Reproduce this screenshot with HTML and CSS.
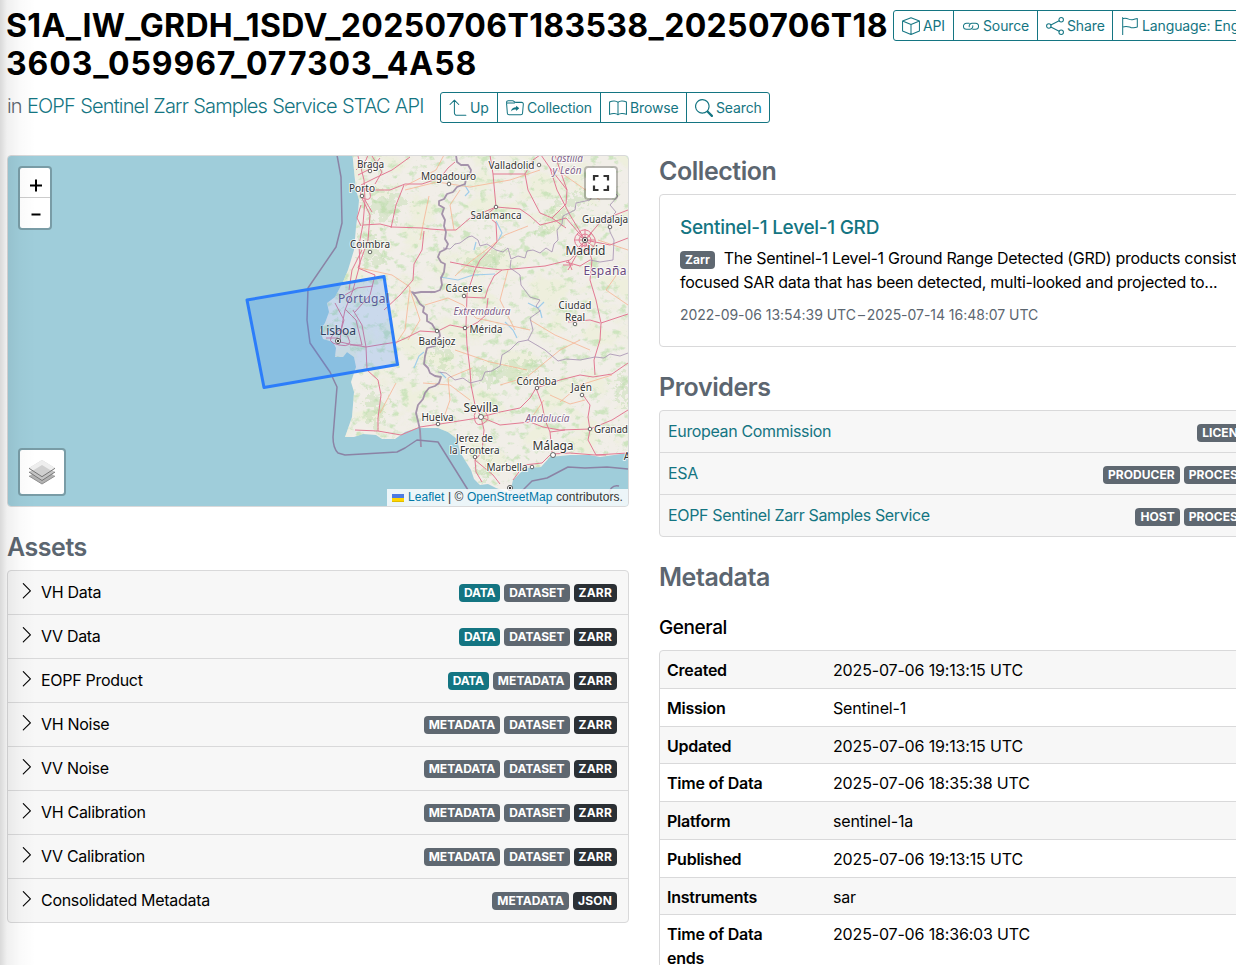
FILE: index.html
```html
<!DOCTYPE html>
<html lang="en">
<head>
<meta charset="utf-8">
<title>S1A_IW_GRDH_1SDV_20250706T183538</title>
<link rel="stylesheet" href="styles.css">
</head>
<body>
<svg class="sprite" aria-hidden="true">
  <symbol id="chev" viewBox="0 0 16 16"><path d="M4.3 1.2 11.4 8.3 4.3 15.4" fill="none" stroke="#000" stroke-width="1.15" stroke-linecap="round" stroke-linejoin="round"/></symbol>
</svg>
<div class="page">
  <header class="header">
    <div class="heading">
      <h1 class="title"><span class="l1">S1A_IW_GRDH_1SDV_20250706T183538_20250706T18</span><span class="l2">3603_059967_077303_4A58</span></h1>
      <div class="sub">
        <p class="in">in <a class="link">EOPF Sentinel Zarr Samples Service STAC API</a></p>
        <div class="btns">
          <button class="btn up"><svg class="ico" viewBox="0 0 16 16"><path d="M4.8 1v11.3a2.2 2.2 0 0 0 2.2 2.2h8M.9 4.9 4.8 1l3.9 3.9"/></svg><span>Up</span></button>
          <button class="btn coll"><svg class="ico" viewBox="0 0 16 16"><path d="M.6 3.8 .5 3a1.5 1.5 0 0 1 1.5-1.5h3.7c1.7 0 1.6 1.5 3.1 1.5h5.1a1.5 1.5 0 0 1 1.5 1.6l-.7 8a1.5 1.5 0 0 1-1.5 1.4H2.7a1.5 1.5 0 0 1-1.5-1.4L.6 5A1 1 0 0 1 1.500 3.500h6"/><path class="solid" d="m11.8 8.300-2.800-2.300v1.400C6.600 7.400 4.900 8.700 4.300 11c1.300-1.300 2.700-1.700 4.700-1.600v1.300z"/></svg><span>Collection</span></button>
          <button class="btn brow"><svg class="ico" viewBox="0 0 16 16"><path d="M8 3C6.500 1.500 3 1.500.5 2.700v11C3 12.500 6.500 12.500 8 14c1.500-1.500 5-1.500 7.500-.3v-11C13 1.500 9.500 1.500 8 3zv11"/></svg><span>Browse</span></button>
          <button class="btn sear"><svg class="ico" viewBox="0 0 16 16"><path class="solid" d="M11.742 10.344a6.500 6.500 0 1 0-1.397 1.398h-.001q.044.060.098.115l3.850 3.850a1 1 0 0 0 1.415-1.414l-3.850-3.850a1 1 0 0 0-.115-.1zM12 6.500a5.500 5.500 0 1 1-11 0 5.500 5.500 0 0 1 11 0"/></svg><span>Search</span></button>
        </div>
      </div>
    </div>
    <div class="btns actions">
      <button class="btn api"><svg class="ico" viewBox="0 0 16 16"><path d="M8 .6 15.500 3.600v8.800L8 15.500.5 12.400V3.600zM.5 3.600 8 6.600l7.500-3M8 6.600v8.900"/></svg><span>API</span></button>
      <button class="btn src"><svg class="ico" viewBox="0 0 16 16"><path d="M6.400 5.500H4a2.700 2.700 0 0 0 0 5.400h3a2.700 2.700 0 0 0 2.600-3.200M9.600 10.900H12a2.700 2.700 0 0 0 0-5.400H9a2.700 2.700 0 0 0-2.600 3.200"/></svg><span>Source</span></button>
      <button class="btn shar"><svg class="ico" viewBox="0 0 16 16"><circle cx="2.500" cy="8" r="2"/><circle cx="13.500" cy="2.500" r="2"/><circle cx="13.500" cy="13.500" r="2"/><path d="m4.300 7.100 7.400-3.700M4.300 8.900l7.400 3.700"/></svg><span>Share</span></button>
      <button class="btn lang"><svg class="ico" viewBox="0 0 16 16"><path d="M1.500 16V.5M1.500 1.500C6 .2 7 3 10 2.500c1.800-.2 3-1 4.500-1.200v7.500C12 9.300 11 10 9 9.500 6 8.500 5 7.500 1.500 9"/></svg><span>Language: English</span></button>
    </div>
  </header>

  <main class="cols">
    <section class="left">
      <div class="map">
        <svg class="tiles" viewBox="8 156 620 350" width="620" height="350">
          <defs>
            <path id="land" d="M352 150 354 170 356 190 359 200 358 212 356 227 354 250 348 270 343 282 335 297 327 303 329 312 325 323 320 330 323 339 333 342 336 348 335 357 343 357 347 352 354 357 356 367 351 382 354 392 352 417 345 437 354 437 363 434 376 435 382 439 395 439 405 432 417 428 438 428 448 432 457 439 460 452 466 462 471 470 474 479 480 485 488 484 496 488 510 493 513 480 520 473 527 468 541 467 550 457 570 455 590 455 600 457 628 453V150z"/>
            <clipPath id="lc"><use href="#land"/></clipPath>
            <filter id="woods" x="0" y="0" width="100%" height="100%" color-interpolation-filters="sRGB"><feTurbulence type="fractalNoise" baseFrequency=".1 .13" numOctaves="5" seed="8"/><feColorMatrix values="0 0 0 0 .76  0 0 0 0 .88  0 0 0 0 .7  5 0 0 0 -2.800"/></filter>
            <filter id="farm" x="0" y="0" width="100%" height="100%" color-interpolation-filters="sRGB"><feTurbulence type="fractalNoise" baseFrequency=".03 .04" numOctaves="5" seed="21"/><feColorMatrix values="0 0 0 0 .92  0 0 0 0 .94  0 0 0 0 .83  0 6 0 0 -3"/></filter>
            <filter id="rough" x="-20%" y="-20%" width="140%" height="140%" color-interpolation-filters="sRGB"><feTurbulence type="fractalNoise" baseFrequency=".15" numOctaves="4" seed="5"/><feDisplacementMap in="SourceGraphic" scale="36" xChannelSelector="R" yChannelSelector="G"/></filter>
          </defs>
          <rect x="8" y="156" width="620" height="350" fill="#9fcdda"/>
          <use href="#land" fill="#f1eee8"/>
          <g clip-path="url(#lc)">
            <rect x="318" y="150" width="312" height="350" filter="url(#farm)" opacity=".55"/>
            <rect x="318" y="150" width="312" height="350" filter="url(#woods)" opacity=".75"/>
            <g class="wood" filter="url(#rough)">
              <path d="M372 195c8-6 18 4 26 0s10 10 2 16-12 14-20 12-14-18-8-28zM362 235c10-4 14 4 20 12s-2 20-10 16-16-16-10-28zM484 460c4-8 8 0 6 8s0 14-6 12 0-12 0-20zM618 375c6-6 10 0 10 12v16c-8-2-14-18-10-28zM562 202l22-14 8 6-20 18-26 20-10-4zM460 262l30-14 20 2-10 12-30 8zM368 390l12 2 4 20-8 14-10-10zM430 345l14-4 8 20-10 10zM470 372l30-8 40-6 6 8-40 12-30 4z"/>
            </g>
            <g class="water"><path d="m464 184 5 8-4 4M496 221l6 12-4 8M440 372l6 6M474 250l2-8M414 368l5-12 5-4M528 303l10 5 6-6M540 310l2 8M505 322l8 8 4 8M440 277l18 3 15-5 22-1"/></g>
          </g>
          <g class="minor">
            <path d="M405 190 437 182 470 187 510 180 540 170M429 196 424 220 420 240M444 155 436 170 405 186M528 226 505 235 486 250 470 262 455 276M360 268 392 275 410 287 405 330 395 345M380 413 396 383M410 290 420 320 408 340M454 230 450 205 460 190M557 170 600 200M598 240 628 250M500 385 527 377 560 350 580 340M550 395 570 404 585 400M560 402 580 385 612 375M472 368 448 378 450 400 443 420M423 383 450 385 470 400M425 305 448 298 463 305M455 350 490 362 527 370M530 320 555 335 590 350M508 270 500 300 515 330M463 305 476 318 530 330M544 400 530 420M620 270 606 290 628 305"/>
          </g>
          <g class="road">
            <path d="M358 156 364 180 365 200 363 224 359 245 360 264 353 290 345 310 341 330 340 342 354 345 366 347 367 370M361 185 375 178 392 170 410 157M360 190 390 190 405 184 422 184 440 178 448 168 455 162M362 198 370 215 368 240 358 268 375 275 370 295 355 312M367 370 378 380 381 395 378 418 378 431M355 430 378 431 401 435 420 427 440 424 478 418M363 225 380 224 392 227 423 228 430 229 444 230 456 230 470 218 496 207M424 231 422 250 414 264 413 280 400 295 384 310M404 185 396 205 391 228M345 295 357 288 373 286M384 344 397 342 406 338 420 331 436 332M436 332 450 325 465 328M496 207 493 174 490 155M496 207 486 215 496 223 497 242 480 260 475 270 467 294 466 326 467 345 470 370 471 385 475 405 481 417M525 174 528 190 540 213 552 218 566 228M525 174 533 160 540 155M493 174 525 174M496 207 520 209 530 216 540 225 552 222 566 218 585 240M450 262 475 267 502 270 545 266 570 260 584 245M463 297 485 298 488 288 494 276 502 270M463 330 478 322 486 315 488 298M585 240 592 260 590 280 596 300 601 323 600 340 594 360 595 375M601 323 628 314M585 240 602 220 628 210M585 240 570 215 557 190 550 168 541 155M552 218 566 204 567 190 550 168M585 240 610 245 628 238M585 240 568 270M481 417 500 412 520 408 530 398 536 388M536 388 560 380 580 375 593 377 612 374 628 363M536 388 542 404 545 420 550 432 552 452M481 417 484 430 482 452 475 460 476 472M481 417 500 425 530 422 543 427M475 460 493 475 500 484M476 472 482 482M543 427 560 430 590 429 612 420 628 410M583 395 590 405 588 417 590 430 588 440 596 455M552 454 570 453 595 455 628 453M513 480 524 465 542 463 550 455M366 347 384 344M353 310 362 325 366 347M335 303 344 320 340 334M345 309 356 320 362 345 350 345M566 262 580 266 590 260M555 155 560 170 567 190M365 200 372 212M372 156 382 172 375 184M550 432 565 430M568 322 590 320 600 323M349 290 352 270 362 250M358 175 372 168 380 158M356 170 366 160 368 155M361 205 357 218 361 226"/>
            <path d="M575 240h20M577 234l17 13M585 229v24M579 247l13-14M578 233q7-7 14 1t0 14-14-1 0-14M581 236q4-4 8 0t0 8-8 0 0-8M335 333q7-7 13 4t-9 8-4-12M476 411q5-4 10 2t-2 10-9-2 1-10M362 190q6-5 8 3t-5 6-3-9M596 455h10M568 260l4 10M573 265h-10M326 338h12"/>
          </g>
          <g class="region"><path d="M443 248 450 249 455 244 460 243 464 240 468 237 472 236 478 240 480 246 487 244 496 250 503 252 508 248 511 259 518 256 525 258 527 251 533 250 540 253 546 248 552 252 554 244 558 240 557 230 562 224 563 216 575 210 576 203 590 200 596 190 612 190M511 260 510 268 516 272 520 275 521 285 530 297 540 300 536 306 540 311 530 318 533 330 528 340 518 342 510 350 502 355 500 366 492 371 485 372 482 380 470 383 463 378 455 380 446 373 438 372M528 340 545 350 558 361 566 359 580 360 595 357 604 358 610 354 620 356 628 353M612 190 618 196 610 205 616 212 608 220 610 232 614 240 613 260 600 262 590 260"/></g>
          <g class="border"><path d="m456 155 1 7 4 3 7 0 3 5-1 5-4 4-1 5-8 3-4 5-6 2-3 5-5 2 0 4 5 3-2 6 3 6-1 6 2 6-1 7 3 5-2 5-6 3-2 5 3 5 4 2-1 8-3 6 1 7-2 5-5 2-6 0-8 0-6 1-3-1 4 5 4 7 4 3-1 5 4 3 0 6 5 3 3 5 4 2 1 5-4 5-1 5-8 2-2 8-1 8 4 4 2 5 5 3 6 1-2 6-4 3-6 2-4 5-2 6-5 6-2 8 2 8 2 9 1 17"/></g>
          <g class="sea"><path d="M337 155 341 177 342 223 336 247 308 288 307 320 310 343 330 372 337 387 333 437Q333 448 338 453L345 455 397 452 405 448 417 440 438 442 448 458 468 490M518 495 532 481 547 478 568 467 585 468 607 467 628 469M609 498q0-14 10-12"/></g>
          <path class="foot" d="M247 300 384 276.500 397.500 364.500 264 387.500z"/>
          <g class="dots"><circle cx="370" cy="165" r="1.800"/><circle cx="362" cy="196" r="1.800"/><circle cx="449" cy="184" r="1.800"/><circle cx="539" cy="165" r="1.800"/><circle cx="496" cy="207" r="1.800"/><circle cx="370" cy="252" r="1.800"/><circle cx="610" cy="227" r="1.800"/><circle cx="464" cy="296" r="1.800"/><circle cx="575" cy="324" r="1.800"/><circle cx="465" cy="328" r="1.800"/><circle cx="437" cy="331" r="1.800"/><circle cx="537" cy="388" r="1.800"/><circle cx="582" cy="395" r="1.800"/><circle cx="481" cy="417" r="2.500"/><circle cx="438" cy="424" r="1.800"/><circle cx="590" cy="429" r="1.800"/><circle cx="553" cy="455" r="2.500"/><circle cx="475" cy="457" r="1.800"/><circle cx="532" cy="467" r="1.800"/><circle cx="585" cy="240" r="2.600"/><circle cx="338" cy="341" r="2.600"/><circle cx="510" cy="488" r="2.600"/></g>
          <g class="caps"><circle cx="585" cy="240" r="1.200"/><circle cx="338" cy="341" r="1.200"/><circle cx="510" cy="488" r="1.200"/></g>
          <g class="names">
            <text x="370.500" y="167.500" textLength="27">Braga</text><text x="362" y="192" textLength="26">Porto</text><text x="448.500" y="180" textLength="55">Mogadouro</text><text x="511.500" y="169" textLength="46">Valladolid</text><text x="496" y="219" textLength="51">Salamanca</text><text x="370" y="248" textLength="40">Coimbra</text><text x="605" y="223" textLength="46">Guadalaja</text><text x="464" y="292" textLength="37">Cáceres</text><text x="575" y="309" textLength="33">Ciudad</text><text x="575" y="321" textLength="20">Real</text><text x="486" y="332.500" textLength="33">Mérida</text><text x="437" y="345" textLength="37">Badajoz</text><text x="536.500" y="385" textLength="40">Córdoba</text><text x="581.500" y="391" textLength="21">Jaén</text><text x="437.500" y="421" textLength="32">Huelva</text><text x="611" y="433" textLength="34">Granad</text><text x="474.500" y="441.500" textLength="37">Jerez de</text><text x="474.500" y="453.500" textLength="50">la Frontera</text><text x="507" y="471" textLength="41">Marbella</text><text x="627" y="460">A</text>
            <text class="big" x="585.500" y="255" textLength="40">Madrid</text><text class="big" x="481" y="412" textLength="35">Sevilla</text><text class="big" x="553" y="450" textLength="41">Málaga</text><text class="big lis" x="338" y="335" textLength="36">Lisboa</text>
            <text class="reg" x="567" y="162" textLength="32">Castilla</text><text class="reg" x="567" y="174" textLength="29">y León</text><text class="reg" x="482" y="314.500" textLength="57">Extremadura</text><text class="reg" x="547.500" y="421.500" textLength="44">Andalucía</text>
            <text class="country" x="605" y="275" textLength="43">España</text><text class="country pt" x="363.500" y="303" textLength="51">Portugal</text>
          </g>
        </svg>
        <div class="zoom ctl"><span class="zb"><svg width="14" height="14" viewBox="0 0 14 14"><path d="M1 7.500h12M7 1.500v12"/></svg></span><span class="zb"><svg width="14" height="14" viewBox="0 0 14 14"><path d="M2.500 7.500h9"/></svg></span></div>
        <div class="full ctl"><svg width="18" height="18" viewBox="0 0 18 18"><path d="M2 6.500V2h4.500M11.500 2H16v4.500M16 11.500V16h-4.500M6.500 16H2v-4.500" fill="none" stroke="#333" stroke-width="2.200"/></svg></div>
        <div class="layers ctl"><svg width="26" height="26" viewBox="0 0 26 26"><path d="m0 17 13-8 13 8-13 8z" fill="#b2b2b2"/><path d="m0 17 13 8 13-8" fill="none" stroke="#8d8d8d"/><path d="m0 13 13-8 13 8-13 8.500z" fill="#c4c4c4"/><path d="m0 13 13 8.500 13-8.500" fill="none" stroke="#777"/><path d="M0 9 13 1l13 8-13 8.500z" fill="#d0d0d0"/><path d="M0 9 13 1l13 8-4 2.600L13 6 4 11.600z" fill="#eee"/><path d="m0 9.300 13 8.400 13-8.400" fill="none" stroke="#777"/></svg></div>
        <div class="attr"><svg width="12" height="8" viewBox="0 0 12 8"><path fill="#4c7be1" d="M0 0h12v4H0z"/><path fill="#ffd500" d="M0 4h12v3H0z"/><path fill="#e0bc00" d="M0 7h12v1H0z"/></svg><span><a>Leaflet</a> | © <a>OpenStreetMap</a> contributors.</span></div>
      </div>
      <h2 class="h2">Assets</h2>
      <div class="list">
        <div class="asset"><svg class="chev"><use href="#chev"/></svg><span>VH Data</span><div class="badges"><b class="bd teal">DATA</b><b class="bd">DATASET</b><b class="bd dark">ZARR</b></div></div>
        <div class="asset"><svg class="chev"><use href="#chev"/></svg><span>VV Data</span><div class="badges"><b class="bd teal">DATA</b><b class="bd">DATASET</b><b class="bd dark">ZARR</b></div></div>
        <div class="asset"><svg class="chev"><use href="#chev"/></svg><span>EOPF Product</span><div class="badges"><b class="bd teal">DATA</b><b class="bd">METADATA</b><b class="bd dark">ZARR</b></div></div>
        <div class="asset"><svg class="chev"><use href="#chev"/></svg><span>VH Noise</span><div class="badges"><b class="bd">METADATA</b><b class="bd">DATASET</b><b class="bd dark">ZARR</b></div></div>
        <div class="asset"><svg class="chev"><use href="#chev"/></svg><span>VV Noise</span><div class="badges"><b class="bd">METADATA</b><b class="bd">DATASET</b><b class="bd dark">ZARR</b></div></div>
        <div class="asset"><svg class="chev"><use href="#chev"/></svg><span>VH Calibration</span><div class="badges"><b class="bd">METADATA</b><b class="bd">DATASET</b><b class="bd dark">ZARR</b></div></div>
        <div class="asset"><svg class="chev"><use href="#chev"/></svg><span>VV Calibration</span><div class="badges"><b class="bd">METADATA</b><b class="bd">DATASET</b><b class="bd dark">ZARR</b></div></div>
        <div class="asset"><svg class="chev"><use href="#chev"/></svg><span>Consolidated Metadata</span><div class="badges"><b class="bd">METADATA</b><b class="bd dark">JSON</b></div></div>
      </div>
    </section>

    <section class="right">
      <h2 class="h2 first">Collection</h2>
      <article class="card">
        <h3 class="card-title link">Sentinel-1 Level-1 GRD</h3>
        <p class="desc"><b class="bd zarr">Zarr</b>The Sentinel-1 Level-1 Ground Range Detected (GRD) products consist of<br>focused SAR data that has been detected, multi-looked and projected to...</p>
        <p class="dates">2022-09-06 13:54:39 UTC<span class="dash">–</span>2025-07-14 16:48:07 UTC</p>
      </article>
      <h2 class="h2">Providers</h2>
      <div class="list">
        <div class="prov"><a class="link">European Commission</a><div class="badges"><b class="bd">LICENSOR</b></div></div>
        <div class="prov"><a class="link">ESA</a><div class="badges"><b class="bd">PRODUCER</b><b class="bd">PROCESSOR</b></div></div>
        <div class="prov"><a class="link">EOPF Sentinel Zarr Samples Service</a><div class="badges"><b class="bd">HOST</b><b class="bd">PROCESSOR</b></div></div>
      </div>
      <h2 class="h2">Metadata</h2>
      <h3 class="general">General</h3>
      <div class="meta">
        <div class="row"><b>Created</b><span>2025-07-06 19:13:15 UTC</span></div>
        <div class="row"><b>Mission</b><span>Sentinel-1</span></div>
        <div class="row"><b>Updated</b><span>2025-07-06 19:13:15 UTC</span></div>
        <div class="row"><b>Time of Data</b><span>2025-07-06 18:35:38 UTC</span></div>
        <div class="row"><b>Platform</b><span>sentinel-1a</span></div>
        <div class="row"><b>Published</b><span>2025-07-06 19:13:15 UTC</span></div>
        <div class="row"><b>Instruments</b><span>sar</span></div>
        <div class="row"><b>Time of Data<br>ends</b><span>2025-07-06 18:36:03 UTC</span></div>
      </div>
    </section>
  </main>
</div>
<div class="edge"></div>
</body>
</html>
```
FILE: styles.css
```css
* { box-sizing: border-box; }
html, body { height: 965px; overflow: hidden; }
body { margin: 0; background: #fff; color: #000; font: 16px/24px Inter, "Liberation Sans", sans-serif; letter-spacing: -.3px; }
h1, h2, h3, p { margin: 0; }
.sprite { display: none; }
.page { width: 1289px; padding: 7px 8px 0 7px; }
.link { color: #147582; }

.header { display: flex; height: 148px; }
.heading { width: 886px; flex: none; }
.title { font-size: 32px; line-height: 38px; font-weight: 700; white-space: nowrap; }
.title span { display: block; margin-left: -1px; }
.l1 { letter-spacing: .36px; }
.l2 { letter-spacing: .9px; }
.sub { display: flex; margin-top: 9px; }
.in { width: 433px; font-size: 20px; line-height: 28px; font-weight: 300; color: #5c6670; letter-spacing: -.82px; word-spacing: .3px; white-space: nowrap; }
.btns { display: flex; height: 31px; border: 1px solid #147582; border-radius: 3px; }
.actions { margin-top: 3px; width: 390px; }
.btn { display: flex; align-items: center; padding: 0 0 0 8px; gap: 3px; border: 0; border-right: 1px solid #147582; background: none; color: #147582; font: 14px/20px Inter, sans-serif; letter-spacing: -.12px; white-space: nowrap; }
.btn:last-child { border-right: 0; }
.ico { width: 18px; height: 18px; flex: none; fill: none; stroke: #147582; stroke-width: .9; stroke-linejoin: round; stroke-linecap: round; }
.ico .solid { fill: #147582; stroke: none; }
.up { width: 57px; } .coll { width: 103px; } .brow { width: 86px; } .sear { width: 82px; }
.api { width: 60px; } .src { width: 84px; } .shar { width: 75px; } .lang { width: 169px; }

.cols { display: flex; gap: 30px; }
.left, .right { width: 622px; flex: none; }
.map { position: relative; height: 352px; border: 1px solid #d9d9da; border-radius: 4px; overflow: hidden; font-family: "Liberation Sans", sans-serif; }
.tiles { display: block; }
.wood { fill: #b5d6a0; opacity: .35; }
.water path { fill: none; stroke: #9fcdea; stroke-width: 1.2; }
.minor path { fill: none; stroke: #f6b493; stroke-width: .8; stroke-linejoin: round; }
.road path { fill: none; stroke: #e27a93; stroke-width: 1; stroke-linejoin: round; }
.region path { fill: none; stroke: #a48fb0; stroke-width: 1; opacity: .8; stroke-linejoin: round; }
.border path { fill: none; stroke: #9c88a4; stroke-width: 1.8; opacity: .9; stroke-linejoin: round; }
.sea path { fill: none; stroke: #8b83a5; stroke-width: 1.5; stroke-linejoin: round; }
.foot { fill: #3388ff; fill-opacity: .2; stroke: #2c7dfa; stroke-width: 3; stroke-linejoin: round; }
.dots circle { fill: #fff; stroke: #444; stroke-width: .8; }
.dots circle:first-child { transform: translateY(6px); }
.caps circle { fill: #333; }
.names { font-family: "Noto Sans", sans-serif; font-size: 10px; letter-spacing: 0; fill: #333; text-anchor: middle; paint-order: stroke; stroke: #fff; stroke-opacity: .75; stroke-width: 2px; stroke-linejoin: round; }
.names .big { font-size: 12px; }
.names .lis { fill: #2d3f60; stroke-opacity: .2; }
.names .reg { font-style: italic; fill: #81638b; }
.names .country { font-size: 12px; fill: #6a4a80; }
.names .pt { fill: #5c5b98; stroke-opacity: .15; }
.ctl { position: absolute; background: #fff; border: 2px solid rgba(0,0,0,.24); background-clip: padding-box; border-radius: 4px; display: flex; align-items: center; justify-content: center; }
.zoom { left: 10px; top: 10px; width: 34px; height: 64px; flex-direction: column; }
.zb { width: 30px; height: 30px; display: flex; align-items: center; justify-content: center; padding: 2px 0 0 1px; }
.zb svg { fill: none; stroke: #000; stroke-width: 2; }
.zb:first-child { border-bottom: 1px solid #ccc; padding-top: 5px; }
.full { right: 10px; top: 10px; width: 34px; height: 34px; }
.layers { left: 10px; bottom: 10px; width: 48px; height: 48px; }
.attr { position: absolute; right: 0; bottom: 0; height: 17px; padding: 0 5px; background: rgba(255,255,255,.8); font-size: 12px; line-height: 17px; color: #333; display: flex; align-items: center; gap: 4px; letter-spacing: .075px; white-space: nowrap; }
.attr a { color: #0078a8; }

.h2 { margin: 24px 0 7px; font-size: 25px; line-height: 32px; font-weight: 600; color: #5c6670; letter-spacing: -.45px; }
.h2.first { margin-top: 0; }
.list, .meta { border: 1px solid #d9d9da; border-radius: 4px; background: #f7f7f7; }
.asset { height: 44px; display: flex; align-items: center; padding: 0 11px 2px; border-bottom: 1px solid #d9d9da; }
.asset:last-child { height: 43px; border-bottom: 0; }
.chev { width: 16px; height: 17px; margin: -2px 6px 0 0; }
.badges { margin-left: auto; display: flex; gap: 4px; padding-top: 2px; }
.bd { display: block; height: 18px; padding: 0 5px; border-radius: 4px; background: #5f6871; color: #fff; font-size: 12px; line-height: 18px; font-weight: 700; letter-spacing: .04px; }
.dark { background: #2b3035; letter-spacing: .2px; }
.teal { background: #147582; letter-spacing: -.2px; }
.card { height: 153px; padding: 21px 20px 20px; border: 1px solid #d9d9da; border-radius: 4px; white-space: nowrap; }
.card-title { font-size: 19px; line-height: 24px; font-weight: 500; letter-spacing: -.28px; margin-bottom: 6px; }
.zarr { display: inline-block; margin-right: 9px; vertical-align: 0; letter-spacing: 0; }
.dates { margin-top: 11px; font-size: 14px; line-height: 20px; color: #5c6670; letter-spacing: -.04px; }
.dash { margin: 0 2px; }
.prov { height: 42px; display: flex; align-items: center; padding: 0 12px 2px 8px; border-bottom: 1px solid #d9d9da; letter-spacing: -.35px; }
.prov:last-child { height: 41px; border-bottom: 0; }
.prov .badges { padding-top: 4px; }
.general { margin: 23px 0 10px; font-size: 19px; line-height: 24px; font-weight: 500; letter-spacing: -.4px; }
.row { display: grid; grid-template-columns: 166px 1fr; padding: 7px 7px 5.750px; border-bottom: 1px solid #d9d9da; }
.row:nth-child(even) { background: #fff; }
.row b { font-weight: 600; letter-spacing: -.24px; }
.row span { letter-spacing: -.16px; }
.edge { position: absolute; left: 0; top: 0; width: 36px; height: 965px; background: linear-gradient(90deg, rgba(0,0,0,.15), rgba(0,0,0,.06) 7px, rgba(0,0,0,.02) 20px, transparent); pointer-events: none; }
```
